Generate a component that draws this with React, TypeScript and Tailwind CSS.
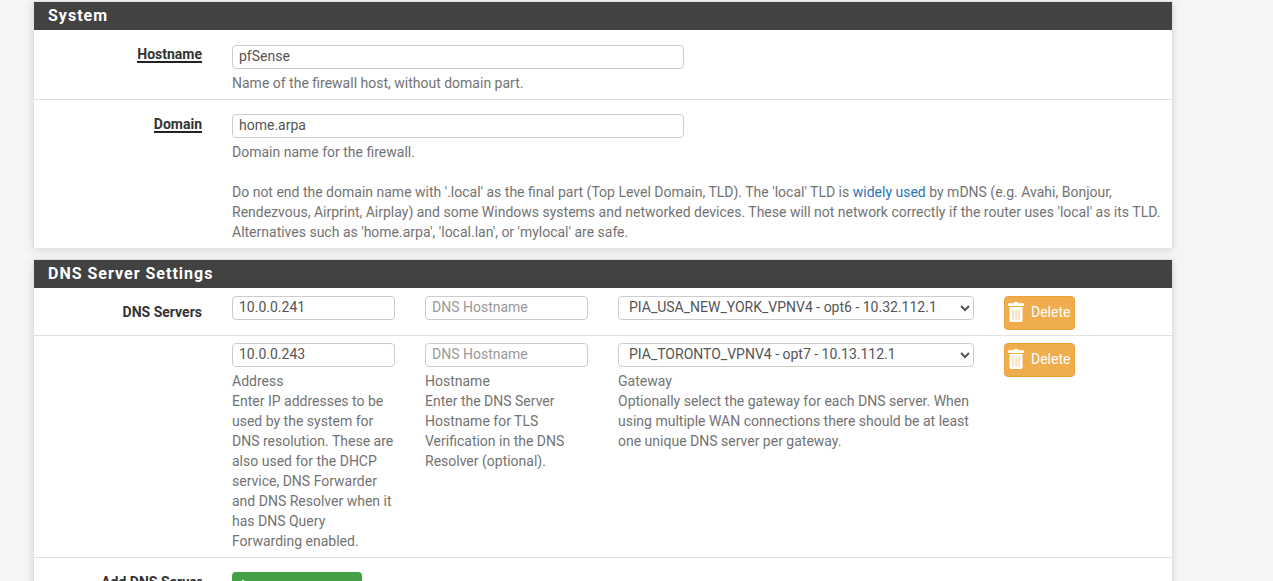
import { FaPlus } from "react-icons/fa";

function TrashIcon() {
  return (
    <svg viewBox="0 0 16 20" className="w-4 h-5 mr-[7px] shrink-0" fill="currentColor">
      <path d="M5.500 1.200 6 0h4l.5 1.200H15c.6 0 1 .4 1 1V4H0V2.200c0-.6.4-1 1-1h4.500z" />
      <path
        fillRule="evenodd"
        d="M1.500 5h13v13.200c0 1-.7 1.800-1.600 1.800H3.100c-.9 0-1.600-.8-1.600-1.800V5zM4.700 7.500h.7v10h-.7v-10zm3 0h.7v10h-.7v-10zm3 0h.7v10h-.7v-10z"
      />
    </svg>
  );
}

function SectionHeading({ title }: { title: string }) {
  return (
    <h2 className="bg-[#424242] h-[28px] pl-[14px] text-white text-base leading-[28px] font-bold tracking-[1px]">
      {title}
    </h2>
  );
}

function FieldLabel({ text, required }: { text: string; required?: boolean }) {
  return (
    <div className="w-[168px] shrink-0 text-right font-bold text-[#333333] leading-5 pt-[14px]">
      {required ? <span className="border-b-[2px] border-[#222222] inline-block leading-[13px]">{text}</span> : text}
    </div>
  );
}

function TextInput({ value, placeholder, width }: { value?: string; placeholder?: string; width: string }) {
  return (
    <input
      type="text"
      defaultValue={value}
      placeholder={placeholder}
      className={`${width} block h-6 px-[6px] pb-[2px] bg-white border border-[#cccccc] rounded-[4px] text-[#555555] placeholder:text-[#999999] outline-none`}
    />
  );
}

function GatewaySelect({ value }: { value: string }) {
  return (
    <select
      defaultValue={value}
      className="block w-[356px] h-6 px-[6px] pb-[2px] bg-white border border-[#cccccc] rounded-[4px] text-[#555555]"
    >
      <option>{value}</option>
    </select>
  );
}

function DeleteButton() {
  return (
    <button className="flex items-center h-[34px] w-[71px] pl-[3px] pb-[2px] bg-[#f0ad4e] border border-[#eea236] rounded-[4px] text-white">
      <TrashIcon />
      Delete
    </button>
  );
}

export default function App() {
  return (
    <div
      className="h-screen overflow-hidden bg-[#f5f5f5] pt-px pl-[33px] pr-[100px] text-sm text-[#737373]"
      style={{ fontFamily: "Roboto, sans-serif" }}
    >
      {/* System */}
      <section className="bg-white border-x border-t border-[#e0e0e0] shadow-[0_2px_8px_rgba(0,0,0,0.12)] mb-[11px]">
        <SectionHeading title="System" />
        <div className="flex border-b border-[#e0e0e0] h-[70px]">
          <FieldLabel text="Hostname" required />
          <div className="pl-[30px] pt-[15px]">
            <TextInput value="pfSense" width="w-[452px]" />
            <p className="mt-1 leading-5">Name of the firewall host, without domain part.</p>
          </div>
        </div>
        <div className="flex h-[148px]">
          <FieldLabel text="Domain" required />
          <div className="pl-[30px] pt-[14px] pr-[8px] flex-1">
            <TextInput value="home.arpa" width="w-[452px]" />
            <p className="mt-1 leading-5">Domain name for the firewall.</p>
            <p className="mt-5 leading-5">
              Do not end the domain name with '.local' as the final part (Top Level Domain, TLD). The 'local' TLD is{" "}
              <a className="text-[#2d74b5]">widely used</a> by mDNS (e.g. Avahi, Bonjour, Rendezvous, Airprint, Airplay)
              and some Windows systems and networked devices. These will not network correctly if the router uses
              'local' as its TLD. Alternatives such as 'home.arpa', 'local.lan', or 'mylocal' are safe.
            </p>
          </div>
        </div>
      </section>

      {/* DNS Server Settings */}
      <section className="bg-white border-x border-t border-[#e0e0e0] shadow-[0_2px_8px_rgba(0,0,0,0.12)]">
        <SectionHeading title="DNS Server Settings" />
        <div className="flex border-b border-[#e0e0e0] h-[48px]">
          <FieldLabel text="DNS Servers" />
          <div className="pl-[30px] pt-2 flex gap-[30px]">
            <TextInput value="10.0.0.241" width="w-[163px]" />
            <TextInput placeholder="DNS Hostname" width="w-[163px]" />
            <GatewaySelect value="PIA_USA_NEW_YORK_VPNV4 - opt6 - 10.32.112.1" />
            <DeleteButton />
          </div>
        </div>
        <div className="flex border-b border-[#e0e0e0] h-[222px]">
          <div className="w-[168px] shrink-0" />
          <div className="pl-[30px] pt-[7px] flex gap-[30px]">
            <div className="w-[163px]">
              <TextInput value="10.0.0.243" width="w-[163px]" />
              <p className="mt-1 leading-5">
                Address
                <br />
                Enter IP addresses to be used by the system for DNS resolution. These are also used for the DHCP
                service, DNS Forwarder and DNS Resolver when it has DNS Query Forwarding enabled.
              </p>
            </div>
            <div className="w-[163px]">
              <TextInput placeholder="DNS Hostname" width="w-[163px]" />
              <p className="mt-1 leading-5">
                Hostname
                <br />
                Enter the DNS Server Hostname for TLS Verification in the DNS Resolver (optional).
              </p>
            </div>
            <div className="w-[356px]">
              <GatewaySelect value="PIA_TORONTO_VPNV4 - opt7 - 10.13.112.1" />
              <p className="mt-1 leading-5">
                Gateway
                <br />
                Optionally select the gateway for each DNS server. When using multiple WAN connections there should be
                at least one unique DNS server per gateway.
              </p>
            </div>
            <div>
              <DeleteButton />
            </div>
          </div>
        </div>
        <div className="flex h-[60px]">
          <FieldLabel text="Add DNS Server" />
          <div className="pl-[30px] pt-[14px]">
            <button className="flex items-center gap-[6px] h-[34px] w-[130px] pl-[4px] pb-[6px] bg-[#43a047] rounded-[4px] text-white whitespace-nowrap">
              <FaPlus className="w-3.5 h-3.5" />
              <span className="mt-[14px]">Add DNS Server</span>
            </button>
          </div>
        </div>
      </section>
    </div>
  );
}
